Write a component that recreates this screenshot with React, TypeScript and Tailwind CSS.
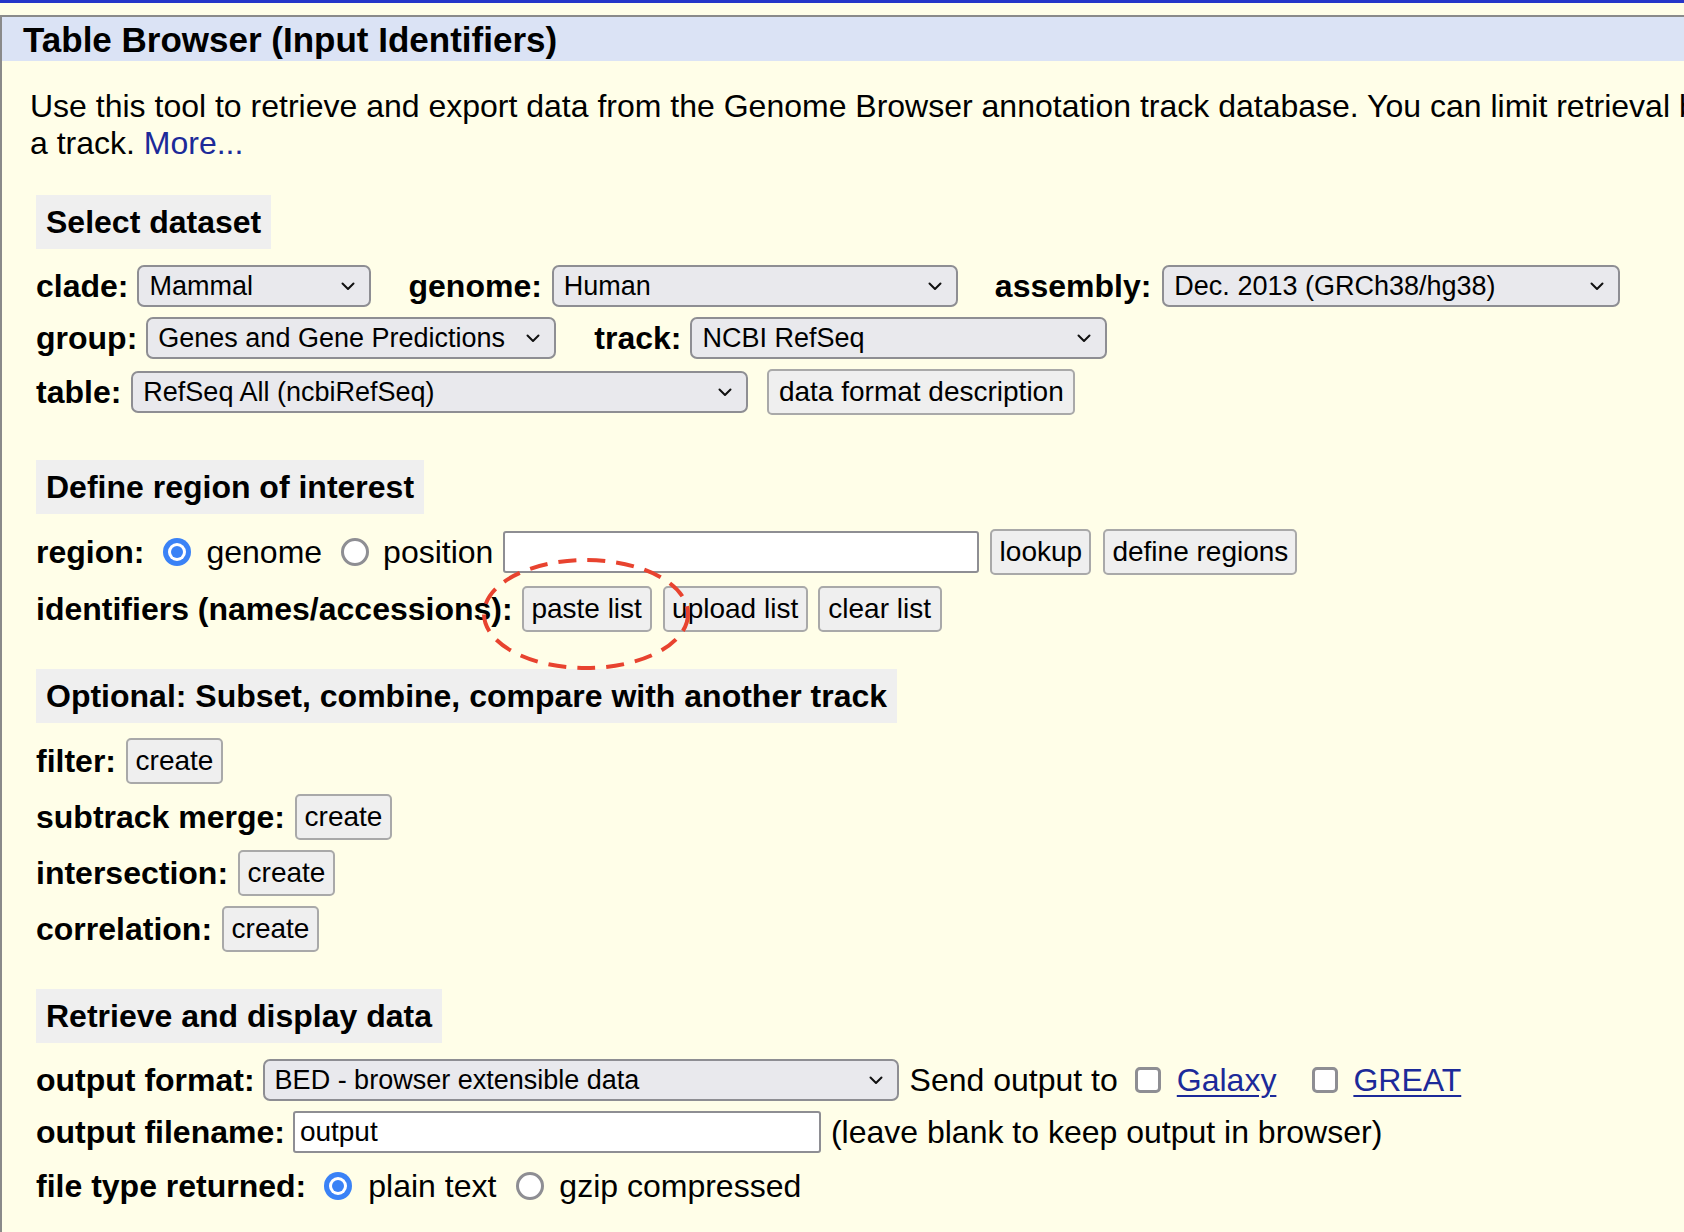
import type { ReactNode } from "react";

function Chevron() {
  return (
    <svg width="14" height="9" viewBox="0 0 14 9" className="shrink-0">
      <path d="M1.5 1.5l5.5 5.5 5.5-5.5" fill="none" stroke="#111" strokeWidth="2" strokeLinecap="round" strokeLinejoin="round" />
    </svg>
  );
}

function Select({ value, className }: { value: string; className: string }) {
  return (
    <div
      className={`flex h-[42px] items-center justify-between rounded-[7px] border-2 border-[#8e8e93] bg-[#e9e9ed] pl-[10px] pr-[14px] text-[27px] leading-none text-black ${className}`}
    >
      <span className="whitespace-nowrap">{value}</span>
      <Chevron />
    </div>
  );
}

function Button({ children, className }: { children: ReactNode; className: string }) {
  return (
    <div
      className={`flex h-[46px] items-center justify-center rounded-[5px] border-2 border-[#a9a9a9] bg-[#efefef] text-[28px] leading-none whitespace-nowrap text-black ${className}`}
    >
      {children}
    </div>
  );
}

function Radio({ checked, className = "" }: { checked?: boolean; className?: string }) {
  if (checked) {
    return (
      <span className={`flex h-[28px] w-[28px] shrink-0 items-center justify-center rounded-full bg-[#3a82f6] ${className}`}>
        <span className="flex h-[18px] w-[18px] items-center justify-center rounded-full bg-white">
          <span className="h-[12px] w-[12px] rounded-full bg-[#3a82f6]" />
        </span>
      </span>
    );
  }
  return <span className={`h-[28px] w-[28px] shrink-0 rounded-full border-[3px] border-[#8e8e93] bg-white ${className}`} />;
}

function Checkbox({ className = "" }: { className?: string }) {
  return <span className={`h-[26px] w-[26px] shrink-0 rounded-[5px] border-[3px] border-[#8e8e93] bg-white ${className}`} />;
}

function Label({ children }: { children: ReactNode }) {
  return <span className="whitespace-nowrap font-bold">{children}</span>;
}

function SectionTitle({ children, className }: { children: ReactNode; className: string }) {
  return (
    <div className={`inline-flex h-[54px] items-center bg-[#efefef] px-[10px] text-[32px] font-bold leading-none ${className}`}>
      {children}
    </div>
  );
}

const Row = ({ children, className }: { children: ReactNode; className: string }) => (
  <div className={`flex h-[46px] items-center ${className}`}>{children}</div>
);

export default function App() {
  return (
    <div className="relative min-h-screen w-full overflow-hidden bg-[#fffee8] font-['Liberation_Sans',Arial,sans-serif] text-[32px] text-black">
      <div className="h-[3px] bg-[#2536c9]" />
      <div className="h-[12px]" />
      <div className="min-h-[1217px] border-l-2 border-t-2 border-[#8a8a8a]">
        {/* title bar */}
        <div className="flex h-[44px] items-center bg-[#dbe3f5] pl-[21px] text-[35px] font-bold leading-none whitespace-nowrap">
          Table Browser (Input Identifiers)
        </div>

        <div className="mt-[27px] pl-[28px] leading-[37px]">
          <div className="whitespace-nowrap">
            Use this tool to retrieve and export data from the Genome Browser annotation track database. You can limit
            retrieval based on data attributes and intersect or merge with data from another track, or retrieve DNA
            sequence covered by
          </div>
          <div className="whitespace-nowrap">
            a track. <span className="text-[#1c2a99]">More...</span>
          </div>
        </div>

        <div className="pl-[34px]">
          {/* Select dataset */}
          <SectionTitle className="mt-[33px]">Select dataset</SectionTitle>
          <Row className="mt-[14px]">
            <Label>clade:</Label>
            <Select value="Mammal" className="ml-[9px] w-[234px]" />
            <span className="ml-[37px]"><Label>genome:</Label></span>
            <Select value="Human" className="ml-[10px] w-[406px]" />
            <span className="ml-[37px]"><Label>assembly:</Label></span>
            <Select value="Dec. 2013 (GRCh38/hg38)" className="ml-[11px] w-[458px]" />
          </Row>
          <Row className="mt-[6px]">
            <Label>group:</Label>
            <Select value="Genes and Gene Predictions" className="ml-[9px] w-[410px]" />
            <span className="ml-[38px]"><Label>track:</Label></span>
            <Select value="NCBI RefSeq" className="ml-[9px] w-[417px]" />
          </Row>
          <Row className="mt-[8px]">
            <Label>table:</Label>
            <Select value="RefSeq All (ncbiRefSeq)" className="ml-[10px] w-[617px]" />
            <Button className="ml-[19px] w-[308px]">data format description</Button>
          </Row>

          {/* Define region */}
          <SectionTitle className="mt-[45px]">Define region of interest</SectionTitle>
          <Row className="mt-[15px]">
            <Label>region:</Label>
            <Radio checked className="ml-[19px]" />
            <span className="ml-[15px]">genome</span>
            <Radio className="ml-[19px]" />
            <span className="ml-[14px]">position</span>
            <div className="ml-[10px] h-[42px] w-[476px] rounded-[3px] border-2 border-[#8e8e93] bg-white" />
            <Button className="ml-[11px] w-[101px]">lookup</Button>
            <Button className="ml-[12px] w-[194px]">define regions</Button>
          </Row>
          <Row className="mt-[11px]">
            <Label>identifiers (names/accessions):</Label>
            <Button className="ml-[9px] w-[130px]">paste list</Button>
            <Button className="ml-[11px] w-[145px]">upload list</Button>
            <Button className="ml-[10px] w-[124px]">clear list</Button>
          </Row>

          {/* Optional */}
          <SectionTitle className="mt-[37px]">Optional: Subset, combine, compare with another track</SectionTitle>
          <Row className="mt-[15px]">
            <Label>filter:</Label>
            <Button className="ml-[10px] w-[97px]">create</Button>
          </Row>
          <Row className="mt-[10px]">
            <Label>subtrack merge:</Label>
            <Button className="ml-[10px] w-[97px]">create</Button>
          </Row>
          <Row className="mt-[10px]">
            <Label>intersection:</Label>
            <Button className="ml-[10px] w-[97px]">create</Button>
          </Row>
          <Row className="mt-[10px]">
            <Label>correlation:</Label>
            <Button className="ml-[10px] w-[97px]">create</Button>
          </Row>

          {/* Retrieve */}
          <SectionTitle className="mt-[37px]">Retrieve and display data</SectionTitle>
          <Row className="mt-[14px]">
            <Label>output format:</Label>
            <Select value="BED - browser extensible data" className="ml-[8px] w-[636px]" />
            <span className="ml-[11px] whitespace-nowrap">Send output to</span>
            <Checkbox className="ml-[17px]" />
            <span className="ml-[16px] text-[#1c2a99] underline decoration-2 underline-offset-4">Galaxy</span>
            <Checkbox className="ml-[36px]" />
            <span className="ml-[15px] text-[#1c2a99] underline decoration-2 underline-offset-4">GREAT</span>
          </Row>
          <Row className="mt-[6px]">
            <Label>output filename:</Label>
            <div className="ml-[8px] flex h-[42px] w-[528px] items-center rounded-[3px] border-2 border-[#8e8e93] bg-white pl-[5px] text-[28px] leading-none">
              output
            </div>
            <span className="ml-[10px] whitespace-nowrap">(leave blank to keep output in browser)</span>
          </Row>
          <Row className="mt-[8px]">
            <Label>file type returned:</Label>
            <Radio checked className="ml-[18px]" />
            <span className="ml-[16px] whitespace-nowrap">plain text</span>
            <Radio className="ml-[20px]" />
            <span className="ml-[15px] whitespace-nowrap">gzip compressed</span>
          </Row>
        </div>
      </div>

      {/* hand-drawn highlight around "paste list" */}
      <svg className="pointer-events-none absolute left-[480px] top-[556px]" width="212" height="116" viewBox="0 0 212 116">
        <ellipse cx="106" cy="58" rx="102" ry="54" fill="none" stroke="#e8432f" strokeWidth="4" strokeDasharray="18 11" />
      </svg>
    </div>
  );
}
